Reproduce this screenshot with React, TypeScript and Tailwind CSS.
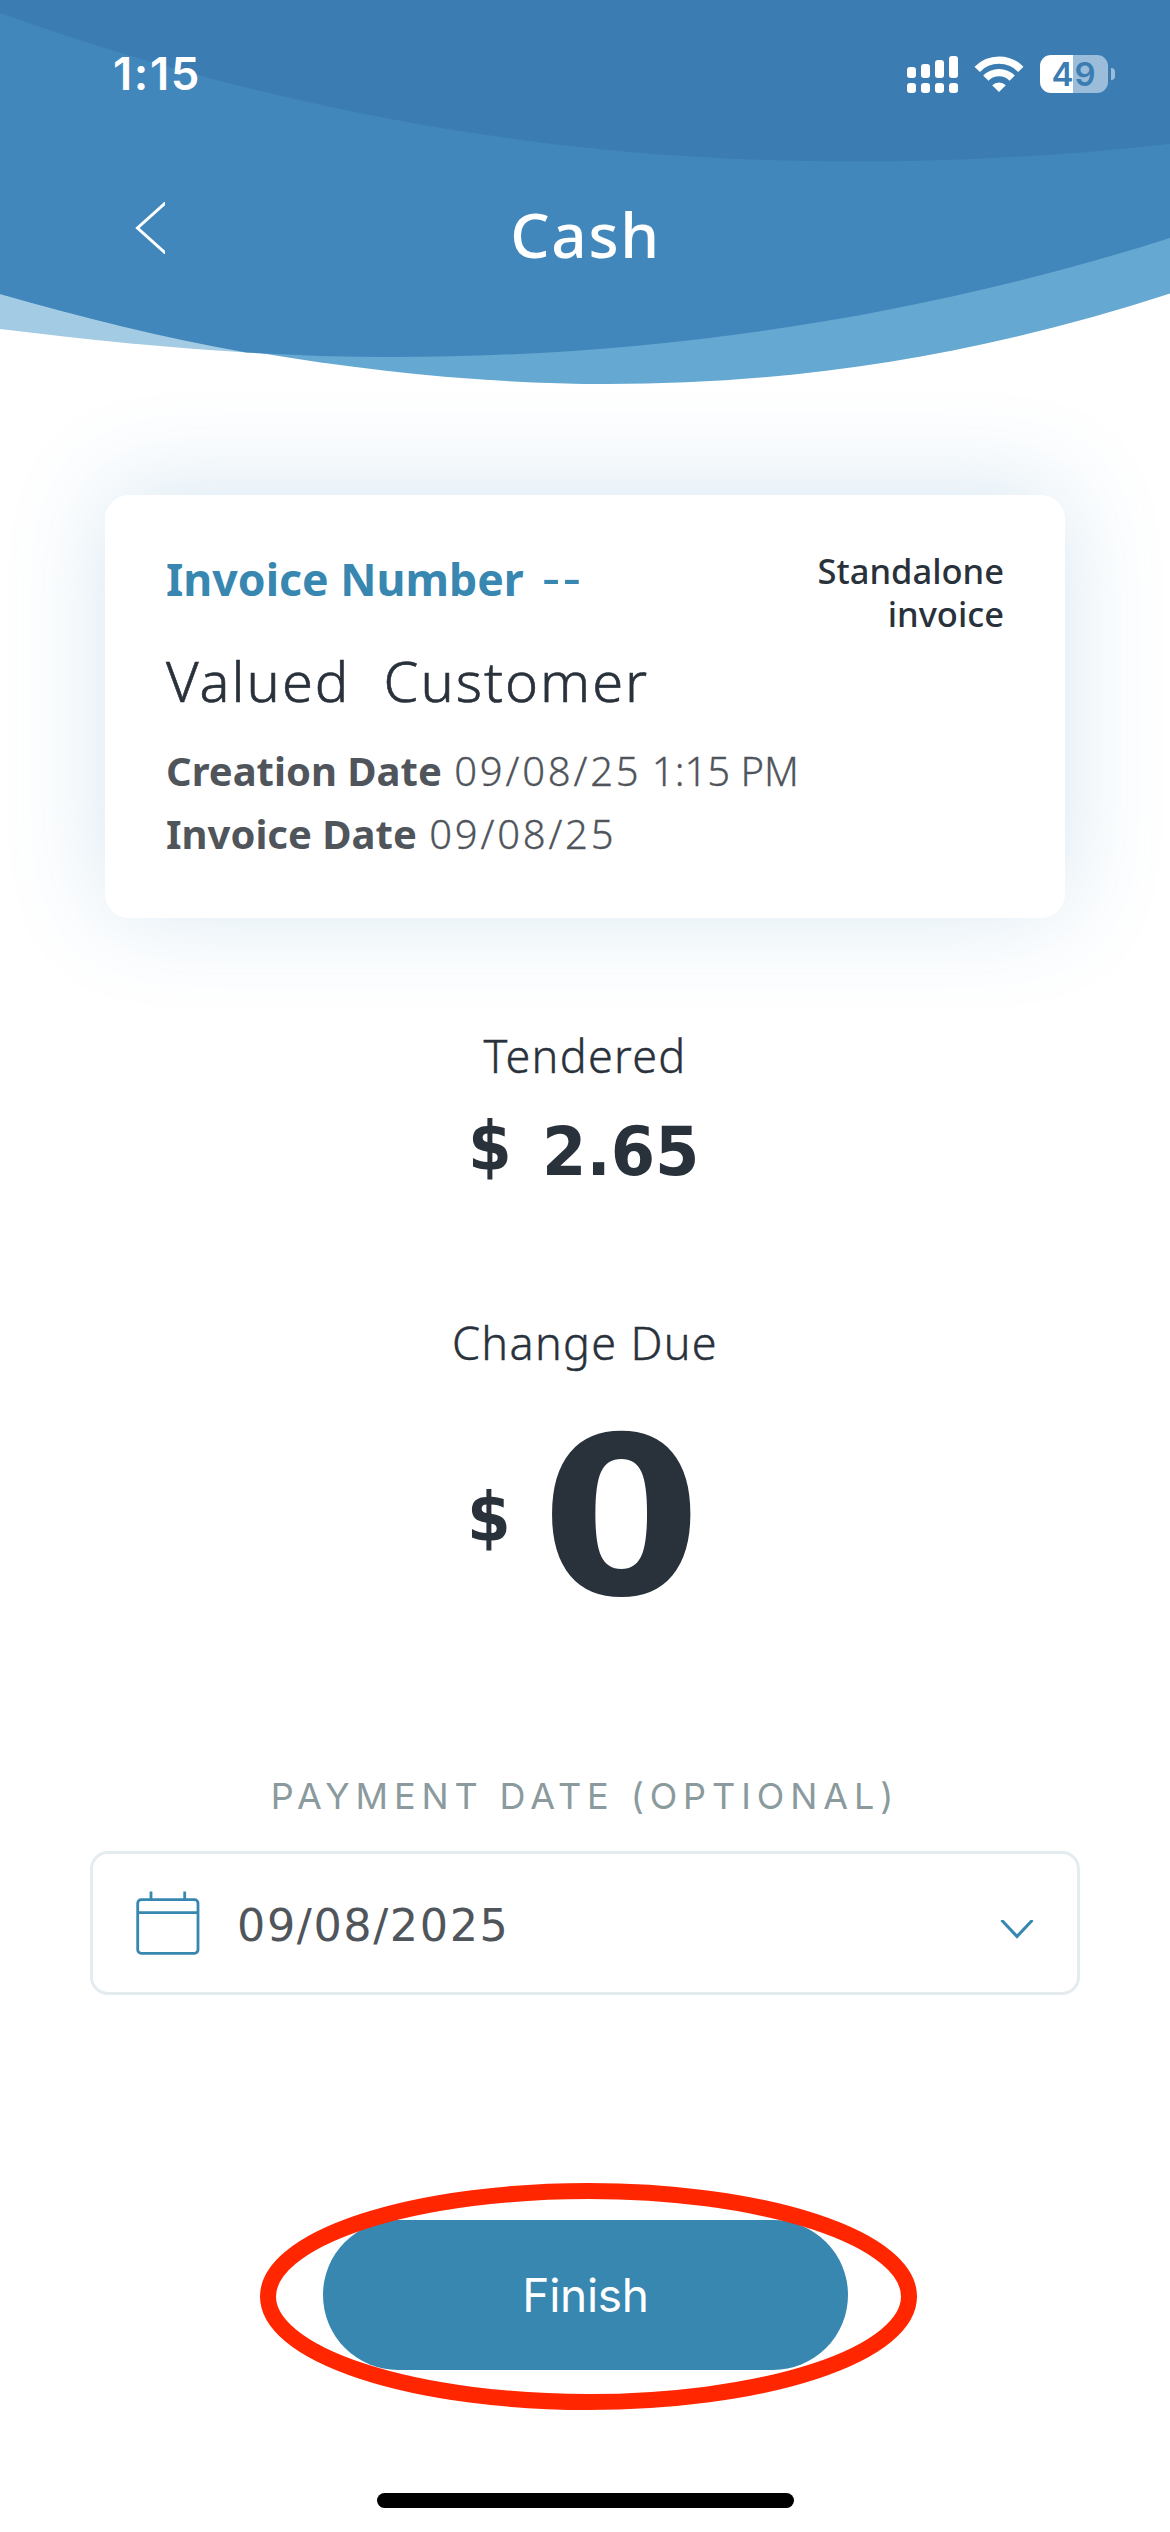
import { ReactNode } from "react";

const StatusBar = () => {
  return (
    <div className="flex h-[148px] items-center justify-between pl-[113px] pr-[55px] font-['Inter',sans-serif] text-white">
      <span className="text-[45.5px] leading-none font-semibold tracking-[1.6px]">1:15</span>

      <div className="flex items-center gap-4">
        <svg width="51" height="38" viewBox="0 0 51 38" fill="currentColor">
          <rect x="0" y="12" width="9" height="11" rx="3" />
          <rect x="14" y="9" width="9" height="14" rx="3" />
          <rect x="28" y="5" width="9" height="18" rx="3" />
          <rect x="42" y="1" width="9" height="22" rx="3" />
          <rect x="0" y="28" width="9" height="10" rx="3" />
          <rect x="14" y="28" width="9" height="10" rx="3" />
          <rect x="28" y="28" width="9" height="10" rx="3" />
          <rect x="42" y="28" width="9" height="10" rx="3" />
        </svg>

        <svg width="50" height="38" viewBox="0 0 50 38" fill="none" stroke="currentColor">
          <path d="M3.2 14.3a30.5 30.5 0 0 1 43.6 0" strokeWidth="7.4" />
          <path d="M11.8 23.2a18.5 18.5 0 0 1 26.4 0" strokeWidth="7.4" />
          <path d="M18.2 30.2a10 10 0 0 1 13.6 0L25 37z" fill="currentColor" stroke="none" />
        </svg>

        <div className="flex items-center gap-[3px]">
          <div className="flex h-[38px] w-[68px] items-center justify-center rounded-[11px] bg-linear-to-r from-white from-[33px] to-[#9cbdd9] to-[33px] text-[33px] leading-none font-semibold tracking-[1px] text-[#3b7db3]">
            49
          </div>
          <div className="h-3 w-1 rounded-r-full bg-[#9cbdd9]" />
        </div>
      </div>
    </div>
  );
};

const Header = () => {
  return (
    <header className="relative h-[384px]">
      <svg className="absolute inset-0" width="1170" height="385" viewBox="0 0 1170 385">
        <path
          d="M0 0H1170V238C930 314 670 357 390 357C260 357 130 345 0 329Z"
          fill="#a4cbe4"
        />
        <path
          d="M0 0H1170V293.5C980 355 800 384 607 384C420 384 200 352 0 294Z"
          fill="#65a8d1"
        />
        <path
          d="M0 0H1170V238C930 314 670 357 390 357C340 357 292 355 246 352.5C164 338 80 317 0 294Z"
          fill="#4287bb"
        />
        <path
          d="M0 0H1170V144C1070 155 965 161.5 855 161.5C560 161.5 280 113 0 13Z"
          fill="#3b7db3"
        />
      </svg>

      <div className="relative">
        <StatusBar />
        <div className="grid h-[172px] grid-cols-[1fr_auto_1fr] items-center text-white">
          <svg className="-mt-3 ml-[135px]" width="30" height="52" viewBox="0 0 30 52" fill="none">
            <path d="M32 -.5L2.5 26L32 52.5" stroke="currentColor" strokeWidth="3" />
          </svg>
          <h1 className="pl-px font-['Noto_Sans',sans-serif] text-[62px] leading-none font-medium tracking-[1.7px]">
            Cash
          </h1>
        </div>
      </div>
    </header>
  );
};

const DateLine = ({ label, date, time }: { label: string; date: string; time?: string }) => {
  return (
    <p className="text-[40px] leading-[63px] text-[#50555c]">
      <span className="font-bold">{label}</span>{" "}
      <span className="ml-0.5 font-light tracking-[2.8px] [-webkit-text-stroke:0.3px_#50555c]">{date}</span>
      {time && <span className="font-light [-webkit-text-stroke:0.3px_#50555c]"> {time}</span>}
    </p>
  );
};

const InvoiceCard = () => {
  return (
    <section className="mx-[105px] mt-[111px] h-[423px] rounded-[24px] bg-white pt-[54px] pr-[61px] pl-[61px] font-['Noto_Sans',sans-serif] text-[#29313b] shadow-[0_-6px_100px_rgba(55,135,190,0.2)]">
      <div className="flex h-[86px] items-start justify-between">
        <div className="flex text-[#3787b1]">
          <span className="text-[44.6px] leading-[60px] font-bold">Invoice Number</span>
          <span className="ml-[18px] font-['DejaVu_Sans',sans-serif] text-[52px] leading-[58px] tracking-[2px]">
            --
          </span>
        </div>
        <div className="w-[200px] text-right text-[34.5px] leading-[43px] font-medium">
          Standalone invoice
        </div>
      </div>

      <h2 className="mt-[5px] text-[56px] leading-[80px] font-light tracking-[2px] whitespace-pre [-webkit-text-stroke:0.6px_#29313b]">
        Valued{"  "}Customer
      </h2>

      <div className="mt-[19px]">
        <DateLine label="Creation Date" date="09/08/25" time="1:15 PM" />
        <DateLine label="Invoice Date" date="09/08/25" />
      </div>
    </section>
  );
};

const Label = ({ children }: { children: ReactNode }) => {
  return (
    <p className="text-center font-['Noto_Sans',sans-serif] text-[45px] leading-[50px] font-light tracking-[1.3px] [-webkit-text-stroke:0.4px_#29313b]">
      {children}
    </p>
  );
};

const Dollar = () => {
  return (
    <div className="w-[74px] shrink-0">
      <span className="inline-block origin-left scale-x-[0.92] text-[68.3px] leading-[80px] font-bold">$</span>
    </div>
  );
};

const Amounts = () => {
  return (
    <section className="pt-[113px] font-['DejaVu_Sans',sans-serif] text-[#29313b]">
      <Label>Tendered</Label>
      <div className="mt-[26px] flex h-[85px] items-start pl-[468px]">
        <Dollar />
        <span className="mt-[5px] origin-left scale-x-[0.935] text-[68.3px] leading-[80px] font-bold">
          2.65
        </span>
      </div>

      <div className="mt-[126px]">
        <Label>Change Due</Label>
      </div>
      <div className="mt-[40px] flex h-[220px] items-center pl-[467px]">
        <Dollar />
        <span className="origin-left scale-x-105 text-[219.6px] leading-[220px] font-bold">0</span>
      </div>
    </section>
  );
};

const PaymentDate = () => {
  return (
    <section className="mt-[148px]">
      <p className="text-center font-['Inter',sans-serif] text-[36px] leading-[40px] tracking-[5.9px] text-[#8a9a9d]">
        PAYMENT DATE (OPTIONAL)
      </p>

      <button className="mx-[90px] mt-[35px] flex h-[144px] w-[990px] items-center rounded-[18px] border-[3px] border-[#e4ecef] bg-white pr-[43px] pl-[42px] text-left">
        <svg width="66" height="66" viewBox="0 0 66 66" fill="none" stroke="#3787b1" strokeWidth="2.8">
          <rect x="2.7" y="9.7" width="60.3" height="53.6" rx="3.5" />
          <path d="M2.7 22.7H63M16 1.5V10.5M49.7 1.5V10.5" />
        </svg>
        <span className="mt-[7px] ml-[36px] flex-1 font-['DejaVu_Sans',sans-serif] text-[44.5px] leading-none tracking-[1.6px] text-[#50555c]">
          09/08/2025
        </span>
        <svg className="mt-3" width="34" height="19" viewBox="0 0 34 19" fill="none">
          <path d="M1.5 0L17 16.5L32.5 0" stroke="#3787b1" strokeWidth="3" />
        </svg>
      </button>
    </section>
  );
};

const FinishButton = () => {
  return (
    <div className="relative mt-[225px] ml-[323px] h-[150px] w-[525px]">
      <button className="h-full w-full rounded-full bg-[#3787b1] font-['Inter',sans-serif] text-[46px] leading-none tracking-[-0.3px] text-white">
        Finish
      </button>
      {/* highlight ring */}
      <svg
        className="pointer-events-none absolute -top-[38px] -left-[64px] max-w-none"
        width="660"
        height="230"
        viewBox="0 0 660 230"
        fill="none"
      >
        <ellipse cx="329.5" cy="114.5" rx="320.5" ry="105.5" stroke="#ff2600" strokeWidth="16" />
      </svg>
    </div>
  );
};

export default function App() {
  return (
    <main className="h-[2532px] w-[1170px] overflow-hidden bg-white">
      <Header />
      <InvoiceCard />
      <Amounts />
      <PaymentDate />
      <FinishButton />
      <div className="mx-auto mt-[123px] h-[15px] w-[417px] rounded-full bg-black" />
    </main>
  );
}
